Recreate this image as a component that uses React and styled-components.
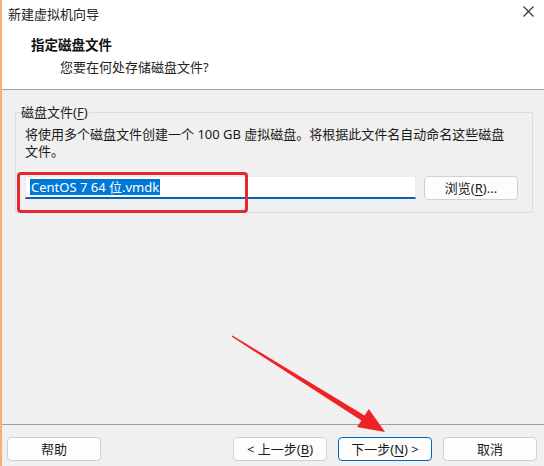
import React from 'react';
import styled, { createGlobalStyle } from 'styled-components';

const GlobalStyle = createGlobalStyle`
  html, body {
    margin: 0;
    padding: 0;
    background: #f0f0f0;
  }
  body {
    font-family: "Noto Sans", "Noto Sans CJK SC", sans-serif;
    font-size: 13px;
    color: #1a1a1a;
  }
`;

const Window = styled.div`
  position: relative;
  width: 544px;
  height: 466px;
  box-sizing: border-box;
  border-left: 2px solid #f3b07a;
  display: flex;
  flex-direction: column;
  background: #f0f0f0;
  overflow: hidden;
`;

const Top = styled.div`
  background: #fff;
  height: 89px;
  border-bottom: 1px solid #a0a0a0;
  display: flex;
  flex-direction: column;
`;

const TitleBar = styled.div`
  height: 26px;
  display: flex;
  align-items: center;
  justify-content: space-between;
  padding: 0 10px 0 6px;
  font-size: 13px;
  color: #222;
`;

const CloseIcon = styled.svg`
  width: 11px;
  height: 11px;
  margin-bottom: 4px;
`;

const Heading = styled.div`
  margin: 10px 0 0 29px;
  font-weight: bold;
  font-size: 13.5px;
  line-height: 18px;
  color: #111;
`;

const SubHeading = styled.div`
  margin: 4px 0 0 58px;
  line-height: 18px;
  color: #222;
`;

const Body = styled.div`
  flex: 1;
  padding: 14px 11px 0 13px;
`;

const Group = styled.fieldset`
  margin: 0;
  padding: 0 10px 11px 9px;
  border: 1px solid #dcdcdc;
  border-radius: 0;
  height: 109px;
  box-sizing: border-box;
`;

const Legend = styled.legend`
  padding: 0 1px;
  margin-left: -5px;
  line-height: 16px;
  color: #222;
`;

const Hint = styled.div`
  margin-top: 6px;
  line-height: 17px;
`;

const Field = styled.div`
  margin-top: 16px;
  display: flex;
  align-items: flex-start;
  gap: 8px;
`;

const FileInput = styled.div`
  width: 391px;
  height: 23px;
  box-sizing: border-box;
  background: #fff;
  border: 1px solid #ececec;
  border-bottom: 2px solid #0a62b8;
  padding: 2px 0 0 4px;
  display: flex;
  align-items: flex-start;
`;

const Selected = styled.span`
  background: #0078d7;
  color: #fff;
  line-height: 16px;
  padding: 0 1px;
`;

const Button = styled.button`
  width: 94px;
  height: 24px;
  box-sizing: border-box;
  border: 1px solid ${p => (p.$primary ? '#0067c0' : '#d0d0d0')};
  border-radius: 4px;
  background: #fdfdfd;
  font-family: inherit;
  font-size: 13px;
  color: #1a1a1a;
  padding: 0;
  line-height: 20px;
`;

const Footer = styled.div`
  border-top: 1px solid #a0a0a0;
  height: 42px;
  box-sizing: border-box;
  padding: 12px 7px 0 5px;
  display: flex;
  align-items: flex-start;
`;

const Spacer = styled.div`
  flex: 1;
`;

const NavGroup = styled.div`
  display: flex;
  gap: 11px;
  margin-right: 11px;
`;

const U = styled.u`
  text-underline-offset: 2px;
`;

const Callout = styled.div`
  position: absolute;
  left: 15px;
  top: 172px;
  width: 231px;
  height: 41px;
  box-sizing: border-box;
  border: 3px solid #e8262b;
  border-radius: 4px;
  pointer-events: none;
`;

const Arrow = styled.svg`
  position: absolute;
  left: -2px;
  top: 0;
  width: 544px;
  height: 466px;
  pointer-events: none;
`;

export default function App() {
  return (
    <>
      <GlobalStyle />
      <Window>
        <Top>
          <TitleBar>
            <span>新建虚拟机向导</span>
            <CloseIcon viewBox="0 0 11 11">
              <path d="M0.5 0.5 L10.5 10.5 M10.5 0.5 L0.5 10.5" stroke="#333" strokeWidth="1.1" fill="none" />
            </CloseIcon>
          </TitleBar>
          <Heading>指定磁盘文件</Heading>
          <SubHeading>您要在何处存储磁盘文件?</SubHeading>
        </Top>
        <Body>
          <Group>
            <Legend>磁盘文件(<U>F</U>)</Legend>
            <Hint>
              将使用多个磁盘文件创建一个 100 GB 虚拟磁盘。将根据此文件名自动命名这些磁盘
              <br />
              文件。
            </Hint>
            <Field>
              <FileInput>
                <Selected>CentOS 7 64 位.vmdk</Selected>
              </FileInput>
              <Button>浏览(<U>R</U>)...</Button>
            </Field>
          </Group>
        </Body>
        <Footer>
          <Button>帮助</Button>
          <Spacer />
          <NavGroup>
            <Button>&lt; 上一步(<U>B</U>)</Button>
            <Button $primary>下一步(<U>N</U>) &gt;</Button>
          </NavGroup>
          <Button>取消</Button>
        </Footer>
        <Callout />
        <Arrow viewBox="0 0 544 466">
          <polygon
            points="232.4,335.4 364.6,415.6 368.8,409 385,432 357,427 361.4,420.6 231.6,336.6"
            fill="#ee2326"
          />
        </Arrow>
      </Window>
    </>
  );
}
